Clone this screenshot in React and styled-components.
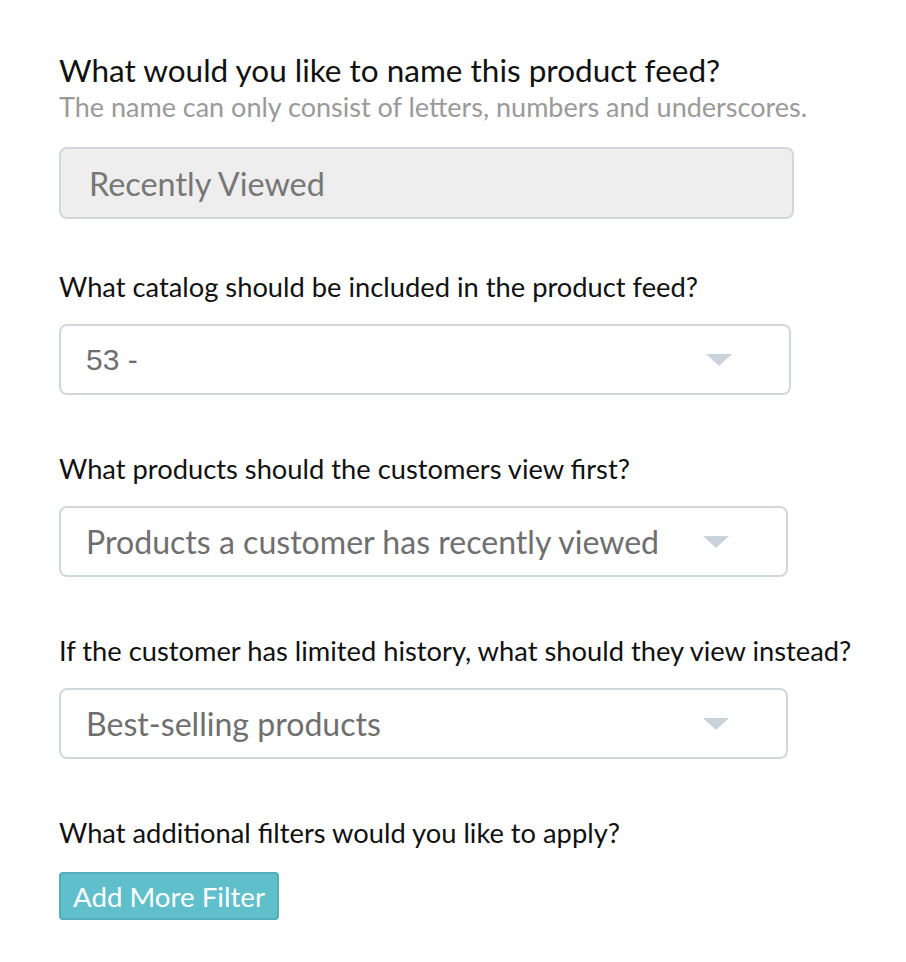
import React from 'react';
import styled, { createGlobalStyle } from 'styled-components';

const GlobalStyle = createGlobalStyle`
    body {
        margin: 0;
        background: #ffffff;
        font-family: Lato, 'Noto Sans', sans-serif;
    }
`;

const fields = [
    {
        label: 'What catalog should be included in the product feed?',
        value: '53 -',
        width: 732,
        system: true
    },
    {
        label: 'What products should the customers view first?',
        value: 'Products a customer has recently viewed',
        width: 729
    },
    {
        label: 'If the customer has limited history, what should they view instead?',
        value: 'Best-selling products',
        width: 729
    }
];

export default () => (
    <Page>
        <GlobalStyle />
        <Section $space={50}>
            <Title>What would you like to name this product feed?</Title>
            <Hint>The name can only consist of letters, numbers and underscores.</Hint>
            <NameInput readOnly value="Recently Viewed" />
        </Section>
        {fields.map(field => (
            <Section key={field.label}>
                <Label>{field.label}</Label>
                <Select $width={field.width}>
                    <SelectValue $system={field.system}>{field.value}</SelectValue>
                    <Caret />
                </Select>
            </Section>
        ))}
        <Section>
            <Label $gap={21}>What additional filters would you like to apply?</Label>
            <Button>Add More Filter</Button>
        </Section>
    </Page>
);

const Page = styled.div`
    padding: 50px 0 0 59px;
    display: flex;
    flex-direction: column;
`;

const Section = styled.div`
    display: flex;
    flex-direction: column;
    align-items: flex-start;
    margin-bottom: ${p => p.$space || 56}px;
`;

const Title = styled.div`
    font-size: 31.5px;
    line-height: 40px;
    color: #111111;
`;

const Label = styled.div`
    font-size: 27.3px;
    line-height: 36px;
    color: #111111;
    margin-bottom: ${p => p.$gap || 19}px;
`;

const Hint = styled.div`
    font-size: 27px;
    line-height: 34px;
    color: #9a9a9a;
    margin-bottom: 23px;
`;

const NameInput = styled.input`
    box-sizing: border-box;
    width: 735px;
    height: 72px;
    padding: 0 28px;
    background: #eeeeee;
    border: 2px solid #d0d8de;
    border-radius: 8px;
    font-family: Lato, 'Noto Sans', sans-serif;
    font-size: 32.4px;
    color: #777777;
    outline: none;
`;

const Select = styled.div`
    box-sizing: border-box;
    width: ${p => p.$width}px;
    height: 71px;
    padding: 0 57px 0 25px;
    display: flex;
    align-items: center;
    justify-content: space-between;
    background: #ffffff;
    border: 2px solid #d0d8de;
    border-radius: 8px;
`;

const SelectValue = styled.span`
    font-family: ${p => (p.$system ? "'Liberation Sans', Arial, sans-serif" : "Lato, 'Noto Sans', sans-serif")};
    font-size: ${p => (p.$system ? '30px' : '32.1px')};
    color: #6f6f6f;
`;

const Caret = styled.span`
    width: 0;
    height: 0;
    border-left: 13px solid transparent;
    border-right: 13px solid transparent;
    border-top: 12px solid #cad3db;
`;

const Button = styled.button`
    box-sizing: border-box;
    height: 48px;
    padding: 0 12px;
    background: #5fbfcb;
    border: 2px solid #52aeb9;
    border-radius: 4px;
    color: #ffffff;
    font-family: Lato, 'Noto Sans', sans-serif;
    font-size: 27.7px;
    cursor: pointer;
`;
